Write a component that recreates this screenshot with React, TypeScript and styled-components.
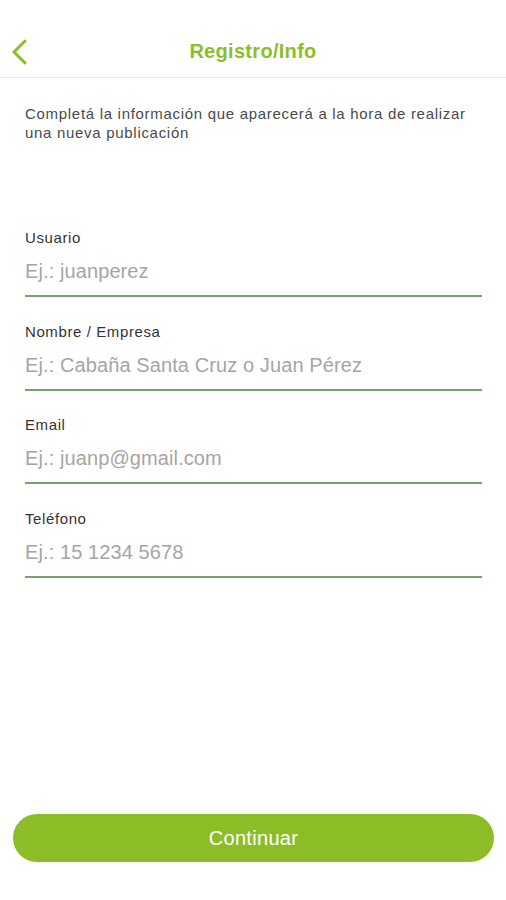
import styled, { createGlobalStyle } from 'styled-components';

const GlobalStyle = createGlobalStyle`
  html, body {
    margin: 0;
    padding: 0;
    background: #fff;
  }
  body {
    font-family: "Liberation Sans", Arial, sans-serif;
  }
`;

interface FieldProps {
  label: string
  placeholder: string
}

const fields: FieldProps[] = [
  { label: 'Usuario', placeholder: 'Ej.: juanperez' },
  { label: 'Nombre / Empresa', placeholder: 'Ej.: Cabaña Santa Cruz o Juan Pérez' },
  { label: 'Email', placeholder: 'Ej.: juanp@gmail.com' },
  { label: 'Teléfono', placeholder: 'Ej.: 15 1234 5678' },
];

const Field: React.FC<FieldProps> = ({ label, placeholder }) =>
  <FieldBox>
    <Label>{label}</Label>
    <Input placeholder={placeholder} />
  </FieldBox>;

const App = () =>
  <Screen>
    <GlobalStyle />
    <Header>
      <BackButton aria-label="Volver">
        <svg width="16" height="26" viewBox="0 0 16 26" fill="none">
          <path d="M14 2 L3 13 L14 24" stroke="#8cbe2a" strokeWidth="3" strokeLinecap="round" strokeLinejoin="round" />
        </svg>
      </BackButton>
      <Title>Registro/Info</Title>
    </Header>
    <Intro>
      Completá la información que aparecerá a la hora de realizar una nueva publicación
    </Intro>
    <Form>
      {fields.map(f => <Field key={f.label} {...f} />)}
    </Form>
    <Footer>
      <Button>Continuar</Button>
    </Footer>
  </Screen>;

const Screen = styled.div`
  display: flex;
  flex-direction: column;
  width: 506px;
  height: 900px;
  background: #fff;
`;

const Header = styled.div`
  position: relative;
  display: flex;
  align-items: center;
  justify-content: center;
  height: 78px;
  padding-top: 2px;
  box-sizing: border-box;
  border-bottom: 1px solid #e6e6e6;
`;

const BackButton = styled.button`
  position: absolute;
  left: 11px;
  top: 39px;
  padding: 0;
  border: 0;
  background: none;
  display: flex;
`;

const Title = styled.div`
  font-size: 20px;
  font-weight: 700;
  letter-spacing: 0.3px;
  color: #8cbe2a;
  margin-top: 24px;
`;

const Intro = styled.p`
  margin: 26px 25px 0;
  font-size: 15px;
  line-height: 19px;
  letter-spacing: 0.7px;
  color: #4a4a4a;
`;

const Form = styled.div`
  display: flex;
  flex-direction: column;
  gap: 25.7px;
  margin: 87px 24px 0 25px;
`;

const FieldBox = styled.label`
  display: flex;
  flex-direction: column;
  border-bottom: 2px solid #7d9f6b;
  padding-bottom: 11px;
`;

const Label = styled.span`
  font-size: 15px;
  line-height: 18px;
  letter-spacing: 0.6px;
  color: #333;
`;

const Input = styled.input`
  margin-top: 11px;
  padding: 0;
  border: 0;
  outline: none;
  background: transparent;
  font-family: "Liberation Sans", Arial, sans-serif;
  font-size: 20px;
  line-height: 26px;
  height: 26px;
  letter-spacing: 0.1px;
  color: #333;

  &::placeholder {
    color: #a5a5a5;
  }
`;

const Footer = styled.div`
  margin-top: auto;
  padding: 0 12px 38px 13px;
`;

const Button = styled.button`
  width: 100%;
  height: 48px;
  border: 0;
  border-radius: 24px;
  background: #8dbd26;
  color: #fff;
  font-family: "Liberation Sans", Arial, sans-serif;
  font-size: 20px;
  letter-spacing: 0.3px;
`;

export default App;
